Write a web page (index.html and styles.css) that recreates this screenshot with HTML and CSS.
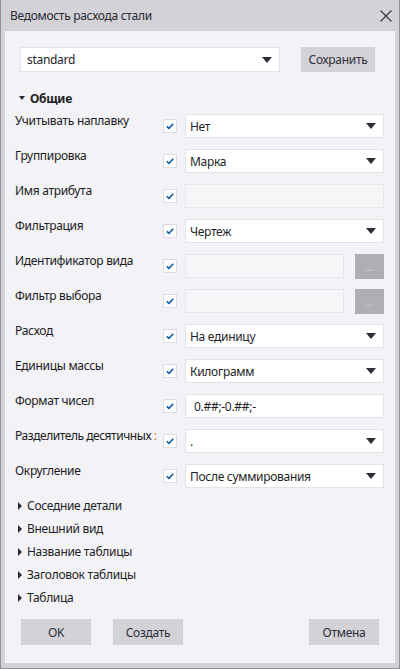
FILE: index.html
```html
<!DOCTYPE html>
<html lang="ru">
<head>
<meta charset="utf-8">
<title>Ведомость расхода стали</title>
<link rel="stylesheet" href="styles.css">
</head>
<body>
<div class="window">
  <div class="titlebar">
    <span class="title">Ведомость расхода стали</span>
    <svg class="close" width="12" height="12" viewBox="0 0 12 12"><path d="M0.5 0.5 L11.5 11.5 M11.5 0.5 L0.5 11.5" stroke="#3b3b46" stroke-width="1.3" fill="none"/></svg>
  </div>
  <div class="content">
    <div class="preset-row">
      <div class="select preset"><span>standard</span><i class="arrow"></i></div>
      <div class="btn save">Сохранить</div>
    </div>

    <div class="section-open"><i class="tri-down"></i><span>Общие</span></div>

    <div class="rows">
      <div class="row"><div class="label">Учитывать наплавку</div><div class="check"><svg viewBox="0 0 14 14"><path d="M3.2 7.3 L5.8 9.8 L10.8 4.4" stroke="#1762a6" stroke-width="2" fill="none"/></svg></div><div class="select"><span>Нет</span><i class="arrow"></i></div></div>
      <div class="row"><div class="label">Группировка</div><div class="check"><svg viewBox="0 0 14 14"><path d="M3.2 7.3 L5.8 9.8 L10.8 4.4" stroke="#1762a6" stroke-width="2" fill="none"/></svg></div><div class="select"><span>Марка</span><i class="arrow"></i></div></div>
      <div class="row"><div class="label">Имя атрибута</div><div class="check"><svg viewBox="0 0 14 14"><path d="M3.2 7.3 L5.8 9.8 L10.8 4.4" stroke="#1762a6" stroke-width="2" fill="none"/></svg></div><div class="input disabled"></div></div>
      <div class="row"><div class="label">Фильтрация</div><div class="check"><svg viewBox="0 0 14 14"><path d="M3.2 7.3 L5.8 9.8 L10.8 4.4" stroke="#1762a6" stroke-width="2" fill="none"/></svg></div><div class="select"><span>Чертеж</span><i class="arrow"></i></div></div>
      <div class="row"><div class="label">Идентификатор вида</div><div class="check"><svg viewBox="0 0 14 14"><path d="M3.2 7.3 L5.8 9.8 L10.8 4.4" stroke="#1762a6" stroke-width="2" fill="none"/></svg></div><div class="combo"><div class="input disabled"></div><div class="dots">...</div></div></div>
      <div class="row"><div class="label">Фильтр выбора</div><div class="check"><svg viewBox="0 0 14 14"><path d="M3.2 7.3 L5.8 9.8 L10.8 4.4" stroke="#1762a6" stroke-width="2" fill="none"/></svg></div><div class="combo"><div class="input disabled"></div><div class="dots">...</div></div></div>
      <div class="row"><div class="label">Расход</div><div class="check"><svg viewBox="0 0 14 14"><path d="M3.2 7.3 L5.8 9.8 L10.8 4.4" stroke="#1762a6" stroke-width="2" fill="none"/></svg></div><div class="select"><span>На единицу</span><i class="arrow"></i></div></div>
      <div class="row"><div class="label">Единицы массы</div><div class="check"><svg viewBox="0 0 14 14"><path d="M3.2 7.3 L5.8 9.8 L10.8 4.4" stroke="#1762a6" stroke-width="2" fill="none"/></svg></div><div class="select"><span>Килограмм</span><i class="arrow"></i></div></div>
      <div class="row"><div class="label">Формат чисел</div><div class="check"><svg viewBox="0 0 14 14"><path d="M3.2 7.3 L5.8 9.8 L10.8 4.4" stroke="#1762a6" stroke-width="2" fill="none"/></svg></div><div class="input text"><span>0.##;-0.##;-</span></div></div>
      <div class="row"><div class="label tight">Разделитель десятичных <span class="colon">:</span></div><div class="check"><svg viewBox="0 0 14 14"><path d="M3.2 7.3 L5.8 9.8 L10.8 4.4" stroke="#1762a6" stroke-width="2" fill="none"/></svg></div><div class="select"><span>.</span><i class="arrow"></i></div></div>
      <div class="row"><div class="label">Округление</div><div class="check"><svg viewBox="0 0 14 14"><path d="M3.2 7.3 L5.8 9.8 L10.8 4.4" stroke="#1762a6" stroke-width="2" fill="none"/></svg></div><div class="select"><span>После суммирования</span><i class="arrow"></i></div></div>
    </div>

    <div class="sections">
      <div class="section-closed"><i class="tri-right"></i><span>Соседние детали</span></div>
      <div class="section-closed"><i class="tri-right"></i><span>Внешний вид</span></div>
      <div class="section-closed"><i class="tri-right"></i><span>Название таблицы</span></div>
      <div class="section-closed"><i class="tri-right"></i><span>Заголовок таблицы</span></div>
      <div class="section-closed"><i class="tri-right"></i><span>Таблица</span></div>
    </div>

    <div class="footer">
      <div class="btn">OK</div>
      <div class="btn">Создать</div>
      <div class="spacer"></div>
      <div class="btn">Отмена</div>
    </div>
  </div>
</div>
</body>
</html>
```

FILE: styles.css
```css
* { box-sizing: border-box; }
html, body { margin: 0; padding: 0; }
body {
  font-family: "Noto Sans", "Open Sans", sans-serif;
  font-size: 12px;
  letter-spacing: -0.3px;
  color: #1e1e24;
  background: #d2d2d7;
}
.window {
  width: 400px;
  height: 669px;
  background: #d2d2d7;
  border: 1px solid #8f8f96;
  border-top: none;
  display: flex;
  flex-direction: column;
}
.titlebar {
  height: 31px;
  flex: none;
  display: flex;
  align-items: center;
  justify-content: space-between;
  padding: 0 7px 0 9px;
}
.title { font-size: 12px; color: #2a2a33; }
.close { display: block; }
.content {
  flex: 1;
  margin: 0 4px 5px;
  background: #f2f2f7;
  padding: 16px 11px 0 10px;
  display: flex;
  flex-direction: column;
}
.preset-row {
  display: flex;
  margin-left: 5px;
  gap: 21px;
}
.select, .input {
  height: 24px;
  background: #fff;
  border: 1px solid #e2e2e7;
  display: flex;
  align-items: center;
  padding: 0 7px 0 4px;
  position: relative;
}
.select span, .input span { flex: 1; white-space: nowrap; }
.preset { width: 260px; height: 25px; }
.preset span { padding-left: 2px; }
.arrow {
  width: 0; height: 0;
  border-left: 5px solid transparent;
  border-right: 5px solid transparent;
  border-top: 6px solid #2e2e36;
}
.btn {
  background: #d2d2d7;
  height: 25px;
  display: flex;
  align-items: center;
  justify-content: center;
  color: #2e2e38;
}
.save { width: 74px; }
.section-open {
  margin-top: 18px;
  height: 16px;
  display: flex;
  align-items: center;
  font-weight: bold;
  font-size: 12px;
  gap: 5px;
  padding-left: 4px;
}
.tri-down {
  width: 0; height: 0;
  border-left: 3.5px solid transparent;
  border-right: 3.5px solid transparent;
  border-top: 4px solid #2a2a30;
}
.rows {
  margin-top: 8px;
  display: flex;
  flex-direction: column;
  gap: 11px;
}
.row {
  display: grid;
  grid-template-columns: 140px 14px 1fr;
  column-gap: 8px;
  align-items: start;
  height: 24px;
}
.label {
  line-height: 16px;
  margin-top: -1px;
  white-space: nowrap;
  color: #1a1a20;
}
.label.tight { letter-spacing: -0.45px; }
.colon { color: #c98230; }
.check {
  width: 14px;
  height: 14px;
  margin-top: 5px;
  background: #fff;
  border: 1px solid #dcdce2;
}
.check svg { display: block; width: 12px; height: 12px; }
.disabled { background: #f6f6f9; border-color: #e6e6eb; }
.text { padding-left: 8px; }
.combo { display: flex; gap: 11px; }
.combo .input { flex: 1; }
.dots {
  width: 29px;
  height: 25px;
  background: #aeaeb5;
  color: #d6d6db;
  font-size: 11px;
  text-align: center;
  line-height: 26px;
  letter-spacing: 0;
}
.sections {
  margin-top: 6px;
  display: flex;
  flex-direction: column;
}
.section-closed {
  height: 23px;
  display: flex;
  align-items: center;
  gap: 5px;
  padding-left: 3px;
}
.tri-right {
  width: 0; height: 0;
  border-top: 4px solid transparent;
  border-bottom: 4px solid transparent;
  border-left: 4px solid #2a2a30;
}
.footer {
  margin-top: 10px;
  display: flex;
  gap: 22px;
  padding: 0 5px 0 6px;
}
.footer .btn { width: 70px; height: 26px; }
.spacer { flex: 1; }
```
